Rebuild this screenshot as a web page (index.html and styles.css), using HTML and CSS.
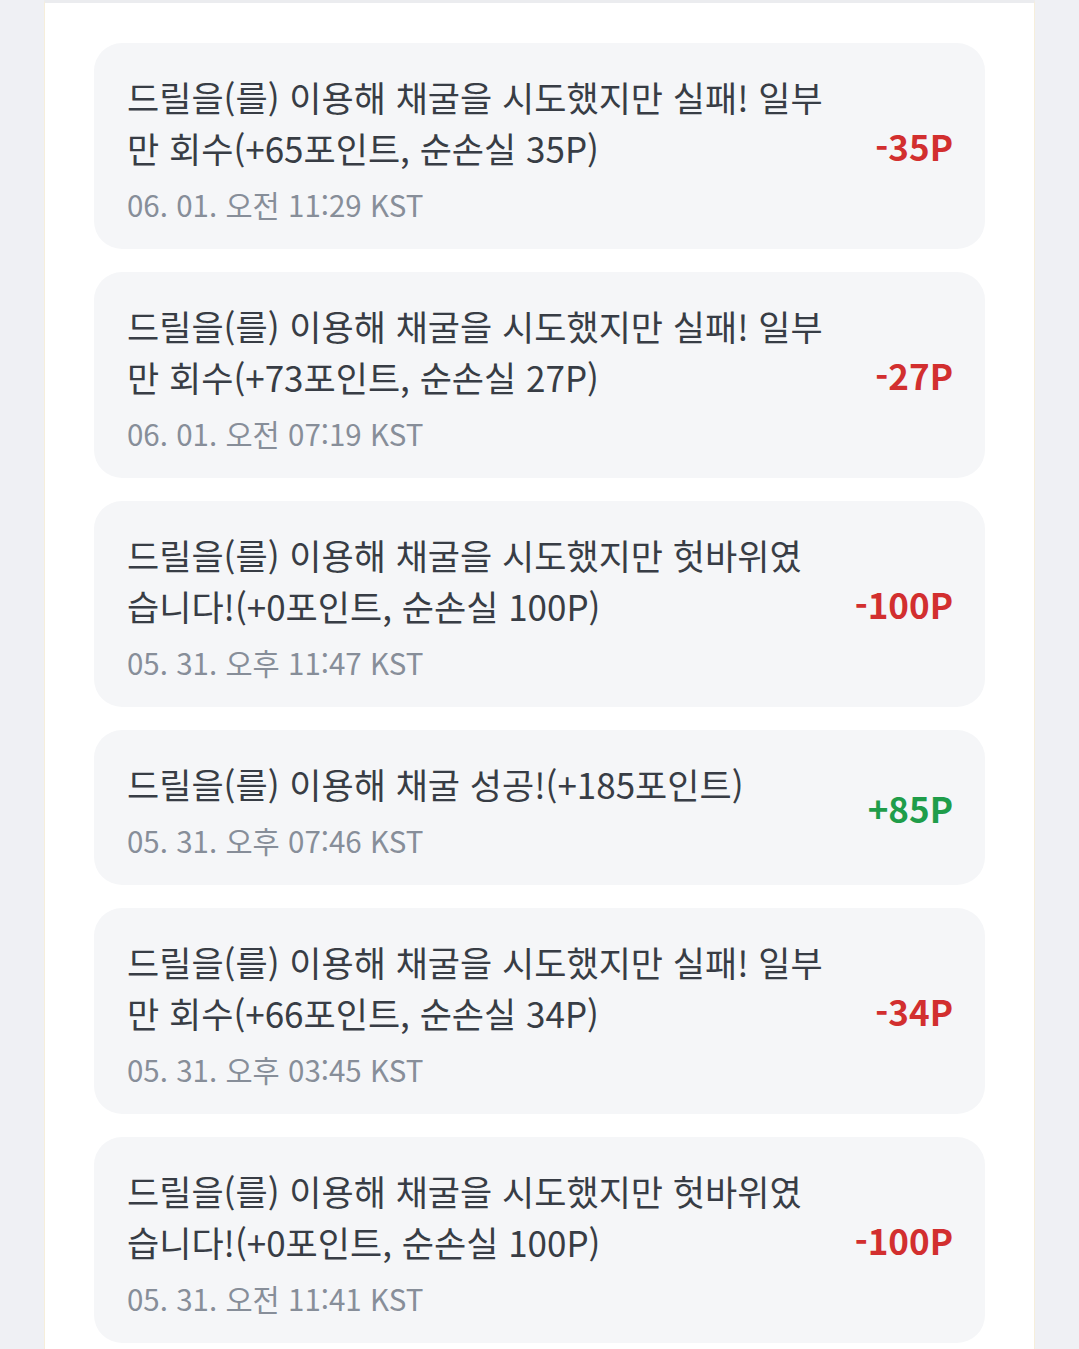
FILE: index.html
```html
<!DOCTYPE html>
<html lang="ko">
<head>
    <meta charset="utf-8">
    <title>포인트 내역</title>
    <link rel="stylesheet" href="styles.css">
</head>
<body>
    <div class="panel">
        <ul class="history">
            <li class="item">
                <div class="info">
                    <p class="desc">드릴을(를) 이용해 채굴을 시도했지만 실패! 일부만 회수(+65포인트, 순손실 35P)</p>
                    <p class="date">06. 01. 오전 11:29 KST</p>
                </div>
                <span class="amount minus">-35P</span>
            </li>
            <li class="item">
                <div class="info">
                    <p class="desc">드릴을(를) 이용해 채굴을 시도했지만 실패! 일부만 회수(+73포인트, 순손실 27P)</p>
                    <p class="date">06. 01. 오전 07:19 KST</p>
                </div>
                <span class="amount minus">-27P</span>
            </li>
            <li class="item">
                <div class="info">
                    <p class="desc">드릴을(를) 이용해 채굴을 시도했지만 헛바위였습니다!(+0포인트, 순손실 100P)</p>
                    <p class="date">05. 31. 오후 11:47 KST</p>
                </div>
                <span class="amount minus">-100P</span>
            </li>
            <li class="item">
                <div class="info">
                    <p class="desc">드릴을(를) 이용해 채굴 성공!(+185포인트)</p>
                    <p class="date">05. 31. 오후 07:46 KST</p>
                </div>
                <span class="amount plus">+85P</span>
            </li>
            <li class="item">
                <div class="info">
                    <p class="desc">드릴을(를) 이용해 채굴을 시도했지만 실패! 일부만 회수(+66포인트, 순손실 34P)</p>
                    <p class="date">05. 31. 오후 03:45 KST</p>
                </div>
                <span class="amount minus">-34P</span>
            </li>
            <li class="item">
                <div class="info">
                    <p class="desc">드릴을(를) 이용해 채굴을 시도했지만 헛바위였습니다!(+0포인트, 순손실 100P)</p>
                    <p class="date">05. 31. 오전 11:41 KST</p>
                </div>
                <span class="amount minus">-100P</span>
            </li>
        </ul>
    </div>
</body>
</html>
```

FILE: styles.css
```css
body {
    margin: 0;
    background-color: #eff0f4;
    font-family: "Noto Sans CJK KR", "Noto Sans", sans-serif;
}
.panel {
    margin: 0 44px;
    min-height: 1349px;
    box-sizing: border-box;
    background-color: #fff;
    border-top: 3px solid #ebecef;
    border-left: 1px solid #f6eedb;
    border-right: 1px solid #f6eedb;
    padding: 40px 49px;
}
.history {
    list-style: none;
    margin: 0;
    padding: 0;
    display: flex;
    flex-direction: column;
    gap: 23px;
}
.item {
    display: flex;
    align-items: center;
    gap: 32px;
    background-color: #f5f6f8;
    border-radius: 28px;
    padding: 28px 32px 24px 33px;
}
.info {
    flex: 1;
    min-width: 0;
}
.desc {
    margin: 0;
    font-size: 35px;
    line-height: 51px;
    color: #383d45;
}
.date {
    margin: 10px 0 0 0;
    font-size: 29.5px;
    line-height: 42px;
    color: #878e99;
}
.amount {
    font-size: 35px;
    font-weight: bold;
    white-space: nowrap;
    margin-bottom: 5px;
}
.minus {
    color: #d22f2f;
}
.plus {
    color: #1f9d4a;
}
```
